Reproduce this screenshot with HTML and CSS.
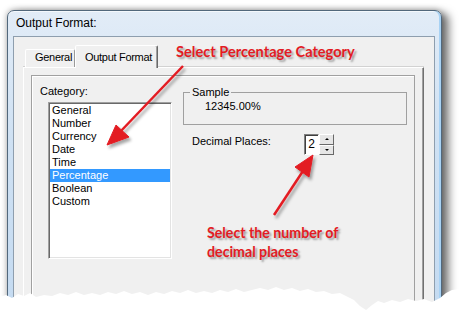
FILE: index.html
```html
<!DOCTYPE html>
<html lang="en">
<head>
  <meta charset="UTF-8">
  <meta name="viewport" content="width=device-width, initial-scale=1.0">
  <title>Output Format</title>
  <link rel="stylesheet" href="styles.css">
</head>
<body>
  <div class="window">
    <div class="titlebar">Output Format:</div>
    <div class="client">
      <div class="tabs">
        <div class="tab">General</div>
        <div class="tab active">Output Format</div>
      </div>
      <div class="panel">
        <div class="page">
          <div class="col-left">
            <div class="category-label">Category:</div>
            <ul class="listbox">
              <li>General</li>
              <li>Number</li>
              <li>Currency</li>
              <li>Date</li>
              <li>Time</li>
              <li class="selected">Percentage</li>
              <li>Boolean</li>
              <li>Custom</li>
            </ul>
          </div>
          <div class="col-right">
            <fieldset class="sample">
              <legend>Sample</legend>
              <div class="sample-value">12345.00%</div>
            </fieldset>
            <div class="decimals">
              <span class="decimals-label">Decimal Places:</span>
              <div class="spin">
                <div class="spin-edit">2</div>
                <div class="spin-buttons">
                  <div class="spin-up"></div>
                  <div class="spin-down"></div>
                </div>
              </div>
            </div>
          </div>
        </div>
      </div>
    </div>
  </div>

  <!-- torn bottom edge of the screenshot -->
  <svg class="tear" width="469" height="329" viewBox="0 0 469 329">
    <polygon fill="#fff" points="0,297 6,295 12,298 18,294 24,296 30,293 36,297 44,295 52,296 60,293 68,295 76,292 84,295 92,293 100,295 108,292 116,294 124,291 132,294 140,292 148,295 156,292 164,294 172,291 180,293 188,290 196,293 204,291 212,293 220,290 228,292 236,289 244,292 252,290 260,288 268,290 276,287 284,290 292,288 300,291 308,289 316,292 324,291 332,294 340,293 348,297 354,300 360,306 366,310 372,305 378,301 384,303 392,300 400,302 408,299 416,301 424,299 432,302 440,298 446,293 452,290 460,289 469,290 469,329 0,329"/>
  </svg>

  <svg class="arrows" width="469" height="329" viewBox="0 0 469 329">
    <defs>
      <filter id="shadow" x="-20%" y="-20%" width="140%" height="140%">
        <feDropShadow dx="2" dy="3" stdDeviation="1.5" flood-color="#000" flood-opacity="0.35"/>
      </filter>
    </defs>
    <g fill="#e31b23" stroke="#e31b23" filter="url(#shadow)">
      <line x1="183" y1="66" x2="120" y2="132" stroke-width="2.5"/>
      <polygon points="107,145 116,125 129,137" stroke-width="1"/>
      <line x1="274" y1="215" x2="303" y2="171" stroke-width="2.5"/>
      <polygon points="313,155 295,167 309,177" stroke-width="1"/>
    </g>
  </svg>

  <div class="callout callout-category">Select Percentage Category</div>
  <div class="callout callout-decimals">Select the number of<br>decimal places</div>
</body>
</html>
```

FILE: styles.css
```css
body {
  margin: 0;
  width: 469px;
  height: 329px;
  overflow: hidden;
  position: relative;
  background: #fff;
  font-family: 'Liberation Sans', Arial, sans-serif;
  font-size: 11px;
  color: #000;
}
.window {
  margin: 10px 0 0 7px;
  width: 435px;
  height: 320px;
  box-sizing: border-box;
  border: 1px solid #52687c;
  border-radius: 7px 7px 0 0;
  background: linear-gradient(#e2ecf7, #cfe1f3 40%, #c3daf1);
  padding: 0 6px 0 5px;
  box-shadow: 0 0 6px rgba(0,0,0,0.35), 7px 3px 8px rgba(0,0,0,0.5),
    inset -2px 0 0 #a8d2f4, inset 0 1px 0 #f4f8fc;
  display: flex;
  flex-direction: column;
}
.titlebar {
  height: 25px;
  line-height: 25px;
  font-size: 12px;
  padding-left: 3px;
}
.client {
  flex: 1;
  background: #f0f0f0;
  border: 1px solid #8e9eae;
  display: flex;
  flex-direction: column;
}
.tabs {
  display: flex;
  align-items: flex-end;
  height: 22px;
  margin: 8px 0 0 11px;
  position: relative;
  z-index: 1;
}
.tab {
  box-sizing: border-box;
  width: 50px;
  height: 18px;
  padding: 1px 0 0 9px;
  line-height: 13px;
  white-space: nowrap;
  letter-spacing: -0.3px;
  border: 1px solid;
  border-bottom: 0;
  border-color: #fff #9a9a9a transparent #fff;
  border-radius: 2px 2px 0 0;
  background: #f0f0f0;
}
.tab.active {
  width: 83px;
  height: 23px;
  margin-bottom: -1px;
  padding: 5px 0 0 9px;
  border-right-color: #696969;
  box-shadow: inset -1px 0 0 #a0a0a0;
}
.panel {
  flex: 1;
  margin: 0 10px 0 9px;
  border: 1px solid;
  border-color: #fff #707070 #707070 #fff;
  box-shadow: inset -1px 0 0 #a0a0a0, 0 -1px 0 #d2d2d2;
  padding: 7px 8px 0 7px;
  display: flex;
  flex-direction: column;
}
.page {
  flex: 1;
  border: 1px solid #a0a0a0;
  box-shadow: inset 1px 1px 0 #fff;
  display: flex;
  padding: 9px 0 0 8px;
}
.category-label {
  line-height: 13px;
}
.listbox {
  margin: 4px 0 0 8px;
  padding: 1px;
  width: 124px;
  height: 157px;
  box-sizing: border-box;
  list-style: none;
  background: #fff;
  border: 1px solid;
  border-color: #a0a0a0 #fff #fff #a0a0a0;
  box-shadow: inset 1px 1px 0 #696969, inset -1px -1px 0 #e3e3e3;
}
.listbox li {
  line-height: 13px;
  padding-left: 2px;
}
.listbox li.selected {
  background: #3399ff;
  color: #fff;
}
.col-right {
  margin: 1px 0 0 11px;
  width: 224px;
}
.sample {
  margin: 0;
  padding: 0 0 11px 6px;
  min-width: 0;
  border: 1px solid #a0a0a0;
}
.sample legend {
  padding: 0 2px;
  line-height: 13px;
}
.sample-value {
  margin-top: 1px;
  padding-left: 15px;
  line-height: 13px;
}
.decimals {
  display: flex;
  align-items: flex-start;
  margin-top: 9px;
}
.decimals-label {
  width: 112px;
  margin: 1px 0 0 9px;
  line-height: 13px;
}
.spin {
  display: flex;
}
.spin-edit {
  width: 15px;
  height: 21px;
  box-sizing: border-box;
  border: 1px solid;
  border-color: #808080 #fff #fff #808080;
  box-shadow: inset 1px 1px 0 #404040;
  background: #fff;
  font-size: 12px;
  line-height: 19px;
  text-align: center;
}
.spin-buttons {
  display: flex;
  flex-direction: column;
  width: 15px;
  height: 21px;
}
.spin-up, .spin-down {
  flex: 1;
  box-sizing: border-box;
  background: #e6e6e6;
  border: 1px solid;
  border-color: #fff #696969 #696969 #fff;
  display: flex;
  align-items: center;
  justify-content: center;
}
.spin-up::after, .spin-down::after {
  content: '';
  border-left: 2px solid transparent;
  border-right: 2px solid transparent;
}
.spin-up::after { border-bottom: 2px solid #000; }
.spin-down::after { border-top: 2px solid #000; }
.tear, .arrows {
  position: absolute;
  left: 0;
  top: 0;
  pointer-events: none;
}
.callout {
  position: absolute;
  font-family: Lato, 'Open Sans', sans-serif;
  font-weight: 700;
  font-size: 14.6px;
  line-height: 18px;
  color: #e31b23;
  text-shadow: 2px 2px 2px rgba(0,0,0,0.35);
  white-space: nowrap;
}
.callout-category {
  left: 176px;
  top: 43px;
}
.callout-decimals {
  left: 207px;
  top: 223px;
  line-height: 19px;
  font-size: 14.2px;
}
```
